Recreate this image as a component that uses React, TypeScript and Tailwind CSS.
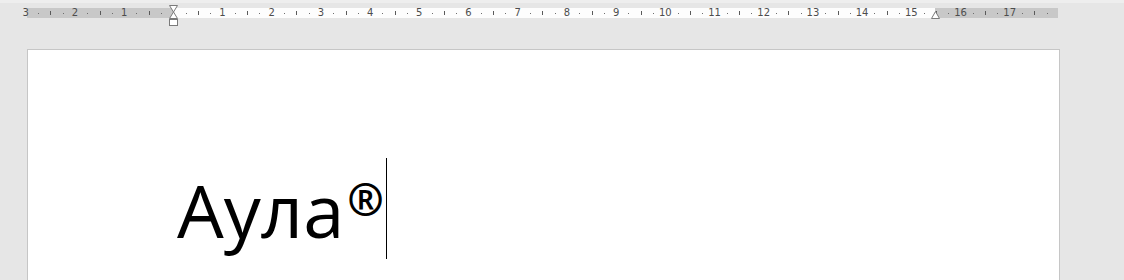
import React from "react";

const CM = 49.2;
const ZERO = 146.3; // relative to ruler left (x=27)

function Ruler() {
  const nums: { x: number; label: string }[] = [];
  for (let n = -3; n <= 17; n++) {
    if (n === 0) continue;
    nums.push({ x: ZERO + n * CM, label: String(Math.abs(n)) });
  }
  const dots: number[] = [];
  const lines: number[] = [];
  for (let n = -3; n <= 17; n++) {
    dots.push(ZERO + (n + 0.25) * CM);
    lines.push(ZERO + (n + 0.5) * CM);
    dots.push(ZERO + (n + 0.75) * CM);
  }
  return (
    <div className="relative ml-[27px] h-[10px] w-[1031px]">
      <div className="flex h-full w-full">
        <div className="h-full w-[146px] bg-[#c8c8c8]" />
        <div className="h-full w-[762px] bg-[#fdfdfd]" />
        <div className="h-full flex-1 bg-[#c8c8c8]" />
      </div>
      <svg className="absolute left-0 top-0" width="1031" height="10">
        {dots.map((x, i) =>
          x > 0 && x < 1031 ? (
            <rect key={"d" + i} x={Math.round(x)} y={5} width={1} height={1} fill="#6e6e6e" />
          ) : null
        )}
        {lines.map((x, i) =>
          x > 0 && x < 1031 ? (
            <rect key={"l" + i} x={Math.round(x)} y={3} width={1} height={4} fill="#5a5a5a" />
          ) : null
        )}
      </svg>
      {nums.map((n) => (
        <span
          key={n.label + n.x}
          className="absolute top-[-1px] -translate-x-1/2 text-[10px] leading-[12px] text-[#4d4d4d]"
          style={{ left: n.x, fontFamily: '"DejaVu Sans", "Liberation Sans", sans-serif' }}
        >
          {n.label}
        </span>
      ))}
      {/* left indent marker */}
      <svg className="absolute left-[141px] top-[-3px]" width="11" height="22">
        <path d="M1.5 0.5 H9.5 L5.5 7 Z" fill="#ffffff" stroke="#7a7a7a" />
        <path d="M5.5 7 L9.5 13.5 H1.5 Z" fill="#ffffff" stroke="#7a7a7a" />
        <rect x="1.5" y="14.5" width="8" height="6" fill="#ffffff" stroke="#7a7a7a" />
      </svg>
      {/* right indent marker */}
      <svg className="absolute left-[903px] top-[3px]" width="11" height="9">
        <path d="M5.5 0.5 L9.5 7.5 H1.5 Z" fill="#ffffff" stroke="#7a7a7a" />
      </svg>
    </div>
  );
}

export default function App() {
  return (
    <div className="h-[280px] w-[1124px] overflow-hidden bg-[#e6e6e6]">
      <div className="h-[3px] w-full bg-[#eeeeee]" />
      <div className="h-[5px]" />
      <Ruler />
      <div className="ml-[27px] mt-[31px] h-[240px] w-[1033px] border border-[#c6c6c6] bg-white">
        <div
          className="flex items-start pl-[149px] pt-[108px] text-black"
          style={{ fontFamily: '"Open Sans", "Noto Sans", sans-serif' }}
        >
          <span className="mt-[15px] text-[74px] font-medium leading-[74px]">Аула</span>
          <span className="ml-[3px] mt-[19px] text-[44px] font-bold leading-[44px]">®</span>
          <span className="ml-[2px] h-[101px] w-px bg-black" />
        </div>
      </div>
    </div>
  );
}
